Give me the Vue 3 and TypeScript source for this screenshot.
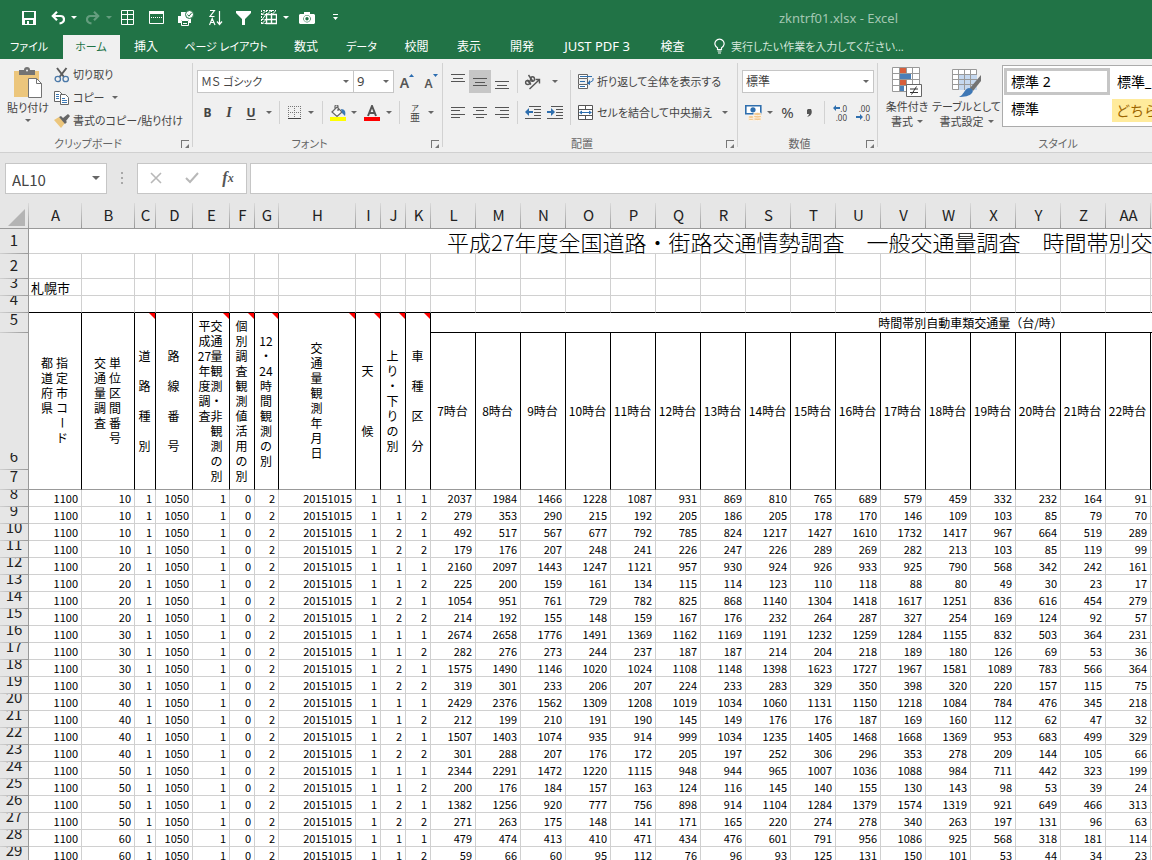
<script setup lang="ts">
interface Column {
  name: string
  width: number
}

interface Heading {
  lines: string[]
  note: boolean
  tight?: boolean
}

const tabs: string[] = ['ファイル', 'ホーム', '挿入', 'ページ レイアウト', '数式', 'データ', '校閲', '表示', '開発', 'JUST PDF 3', '検査']
const activeTab = 'ホーム'
const isKana = (text: string): boolean => /[ァ-ン]/.test(text)
const isLatin = (text: string): boolean => /[A-Z]/.test(text)

const leading: Column[] = [
  { name: 'A', width: 53 },
  { name: 'B', width: 53 },
  { name: 'C', width: 21 },
  { name: 'D', width: 37 },
  { name: 'E', width: 37 },
  { name: 'F', width: 25 },
  { name: 'G', width: 24 },
  { name: 'H', width: 77 },
  { name: 'I', width: 25 },
  { name: 'J', width: 25 },
  { name: 'K', width: 25 },
]
const hourly: Column[] = 'L M N O P Q R S T U V W X Y Z AA'.split(' ').map((name) => ({ name, width: 45 }))
const columns: Column[] = [...leading, ...hourly]

const headings: Heading[] = [
  { lines: ['都道府県', '指定市コード'], note: false },
  { lines: ['交通量調査', '単位区間番号'], note: false },
  { lines: ['道 路 種 別'], note: true },
  { lines: ['路 線 番 号'], note: false },
  { lines: ['平成27年度調査', '交通量観測・非観測の別'], note: true, tight: true },
  { lines: ['個別調査観測値活用の別'], note: true },
  { lines: ['12・24時間観測の別'], note: true },
  { lines: ['交通量観測年月日'], note: true },
  { lines: ['天   候'], note: true },
  { lines: ['上り・下りの別'], note: true },
  { lines: ['車 種 区 分'], note: true },
]
const hours: string[] = Array.from({ length: 16 }, (_, i) => `${i + 7}時台`)

const glyphs = (line: string): string[] => line.match(/\d+|./gu) ?? []

const counts: string[] = [
  '2037 1984 1466 1228 1087 931 869 810 765 689 579 459 332 232 164 91',
  '279 353 290 215 192 205 186 205 178 170 146 109 103 85 79 70',
  '492 517 567 677 792 785 824 1217 1427 1610 1732 1417 967 664 519 289',
  '179 176 207 248 241 226 247 226 289 269 282 213 103 85 119 99',
  '2160 2097 1443 1247 1121 957 930 924 926 933 925 790 568 342 242 161',
  '225 200 159 161 134 115 114 123 110 118 88 80 49 30 23 17',
  '1054 951 761 729 782 825 868 1140 1304 1418 1617 1251 836 616 454 279',
  '214 192 155 148 159 167 176 232 264 287 327 254 169 124 92 57',
  '2674 2658 1776 1491 1369 1162 1169 1191 1232 1259 1284 1155 832 503 364 231',
  '282 276 273 244 237 187 187 214 204 218 189 180 126 69 53 36',
  '1575 1490 1146 1020 1024 1108 1148 1398 1623 1727 1967 1581 1089 783 566 364',
  '319 301 233 206 207 224 233 283 329 350 398 320 220 157 115 75',
  '2429 2376 1562 1309 1208 1019 1034 1060 1131 1150 1218 1084 784 476 345 218',
  '212 199 210 191 190 145 149 176 176 187 169 160 112 62 47 32',
  '1507 1403 1074 935 914 999 1034 1235 1405 1468 1668 1369 953 683 499 329',
  '301 288 207 176 172 205 197 252 306 296 353 278 209 144 105 66',
  '2344 2291 1472 1220 1115 948 944 965 1007 1036 1088 984 711 442 323 199',
  '200 176 184 157 163 124 116 145 140 155 130 143 98 53 39 24',
  '1382 1256 920 777 756 898 914 1104 1284 1379 1574 1319 921 649 466 313',
  '271 263 175 148 141 171 165 220 274 278 340 263 197 131 96 63',
  '479 474 413 410 471 434 476 601 791 956 1086 925 568 318 181 114',
  '59 66 60 95 112 76 96 93 125 131 150 101 53 44 34 23',
]

const records = counts.map((line, i) => ({
  row: i + 8,
  cells: [
    '1100',
    String(10 * (Math.floor(i / 4) + 1)),
    '1',
    '1050',
    '1',
    '0',
    '2',
    '20151015',
    '1',
    String((Math.floor(i / 2) % 2) + 1),
    String((i % 2) + 1),
    ...line.split(' '),
  ],
}))
</script>

<template>
  <div class="app">
    <header class="titlebar">
      <div class="quick">
        <button aria-label="上書き保存">
          <svg width="14" height="14" viewBox="0 0 14 14"><path fill="#fff" fill-rule="evenodd" d="M0 0h14v14H0zM2 1v6h10V1zM3 9v4h2v-3h2v3h4V9z" /></svg>
        </button>
        <button aria-label="元に戻す">
          <svg width="14" height="14" viewBox="0 0 14 14"><path d="M2 5h7.500c2.300 0 3.500 1.400 3.500 3.500S11.500 12 8.500 12.500M6 .8 1.800 5 6 9.200" fill="none" stroke="#fff" stroke-width="2.200" /></svg>
          <i class="caret"></i>
        </button>
        <button class="dim" aria-label="やり直し">
          <svg width="14" height="14" viewBox="0 0 14 14"><path d="M12 5H4.500C2.200 5 1 6.400 1 8.500S2.500 12 5.500 12.500M8 .8 12.200 5 8 9.200" fill="none" stroke="#fff" stroke-width="2.200" /></svg>
          <i class="caret"></i>
        </button>
        <button aria-label="枠線">
          <svg width="13" height="15" viewBox="0 0 13 15"><path d="M.5.5h12v14H.5zM6.500 0v4M6.500 10v5M6.500 5v5M0 4.500h13M0 9.500h13" fill="none" stroke="#fff" /></svg>
        </button>
        <button aria-label="ウィンドウ">
          <svg width="15" height="13" viewBox="0 0 15 13"><path d="M.5.5h14v12H.5z" fill="none" stroke="#fff" /><path d="M0 0h15v3H0z" fill="#fff" /><path d="M2 6.500h11" stroke="#fff" stroke-dasharray="1 1" /></svg>
        </button>
        <button aria-label="印刷プレビュー">
          <svg width="17" height="16" viewBox="0 0 17 16"><path fill="#fff" d="M0 6h3V2h5v4h5v7h-2v-3H3v3H0z" /><path d="M3.500 10.500h7v5h-7zM5 13.500h4" fill="#217346" stroke="#fff" /><circle cx="11.500" cy="4.500" r="4" fill="#fff" stroke="#217346" /><path d="m9.500 4.500 1.500 1.700 2.700-3.400" fill="none" stroke="#217346" /></svg>
        </button>
        <button aria-label="降順">
          <svg width="14" height="16" viewBox="0 0 14 16"><path d="M1 .5h4.500L1 6.500h4.500M.5 15 3.200 8.500 6 15M1.500 12.500H5M10.500 1v13M8 11.500l2.500 3 2.500-3" fill="none" stroke="#fff" stroke-width="1.200" /></svg>
        </button>
        <button aria-label="フィルター">
          <svg width="15" height="14" viewBox="0 0 15 14"><path fill="#fff" d="M0 0h15v2L9 8v6H6V8L0 2z" /></svg>
        </button>
        <button aria-label="罫線">
          <svg width="16" height="15" viewBox="0 0 16 15"><path d="M.5 14V.5H15M.5 4.500H15M5.500 0v14M10.500 0v4M.5 9.500H5M.5 13.500H5" fill="none" stroke="#fff" stroke-dasharray="2 1" /><path d="m1.500 4 3-3m2 3 3-3m2 3 3-3M1.500 9l3-4M1.500 13l3-3" stroke="#fff" /><path d="M5.500 4.500h10v9h-10zM10.500 4.500v9M5.500 9.500h10" fill="none" stroke="#fff" stroke-width="1.400" /></svg>
          <i class="caret"></i>
        </button>
        <button aria-label="カメラ">
          <svg width="16" height="12" viewBox="0 0 16 12"><path fill="#fff" fill-rule="evenodd" d="M1 2h4V0h6v2h4l1 1v8l-1 1H1l-1-1V3zm7 1a3.700 3.700 0 1 0 .1 0z" /><circle cx="8" cy="6.700" r="2.400" fill="none" stroke="#fff" stroke-width="1.400" /></svg>
        </button>
        <button aria-label="クイック アクセスのカスタマイズ">
          <svg width="5" height="7" viewBox="0 0 5 7"><path fill="#fff" d="M0 0h5v1H0zM0 3h5L2.500 6z" /></svg>
        </button>
      </div>
      <h1>zkntrf01.xlsx - Excel</h1>
    </header>

    <nav class="tabs">
      <button v-for="tab in tabs" :key="tab" :class="{ active: tab === activeTab, kana: isKana(tab), latin: isLatin(tab) }">{{ tab }}</button>
      <label class="tell">
        <svg width="11" height="16" viewBox="0 0 11 16"><path d="M3.500 11.500V9.800A4.600 4.600 0 1 1 7.500 9.800v1.700zM3.500 13h4M4 15h3" fill="none" stroke="#fff" stroke-width="1.200" /></svg>
        <input type="text" placeholder="実行したい作業を入力してください..." aria-label="実行したい作業" />
      </label>
    </nav>

    <div class="ribbon">
      <section class="group clipboard">
        <div class="body">
          <button class="big">
            <svg width="30" height="32" viewBox="0 0 30 32"><path fill="#ecc67c" d="M1 4h25v26H1z" /><path fill="#737373" d="M6 3h5a3 3 0 0 1 6 0h5v5H6z" /><circle cx="14" cy="3.500" r="1" fill="#f0f0f0" /><path d="M15.500 11.500h8l5 5v14h-13z" fill="#fff" stroke="#737373" /><path d="M23.500 11.500v5h5" fill="none" stroke="#737373" /></svg>
            <span>貼り付け</span>
            <i class="caret"></i>
          </button>
          <div class="stack">
            <button>
              <svg width="16" height="16" viewBox="0 0 16 16"><path d="m3 1 7 9M12.500 1 5.500 10" stroke="#5c5c5c" stroke-width="2" /><circle cx="3.800" cy="12" r="2.700" fill="none" stroke="#4a78a8" stroke-width="1.300" /><circle cx="11.700" cy="12" r="2.700" fill="none" stroke="#4a78a8" stroke-width="1.300" /></svg>
              <span>切り取り</span>
            </button>
            <button>
              <svg width="16" height="14" viewBox="0 0 16 14"><path d="M.5.5h5l3 3v7h-8z" fill="#fff" stroke="#666" /><path d="M6.500 3.500h5l3 3v7h-8z" fill="#fff" stroke="#666" /><path d="M2 3.500h3M2 5.500h3M2 7.500h3M8 7.500h3M8 9.500h5M8 11.500h5" stroke="#3b78b4" /></svg>
              <span>コピー</span>
              <i class="caret"></i>
            </button>
            <button>
              <svg width="16" height="14" viewBox="0 0 16 14"><path fill="#ecc67c" d="m0 6 5-3 6 6-4 5z" /><path fill="#666" d="m5 3 2-1 2 2 5-4 2 2-4 5 1 1-2 2z" /></svg>
              <span>書式のコピー/貼り付け</span>
            </button>
          </div>
        </div>
        <footer>クリップボード<button class="launch" aria-label="クリップボードの設定"></button></footer>
      </section>

      <section class="group font">
        <div class="body">
          <div class="tools pickers">
            <span class="pick"><select aria-label="フォント"><option>ＭＳ ゴシック</option></select></span>
            <span class="pick"><select aria-label="フォント サイズ"><option>9</option></select></span>
            <button class="grow" aria-label="フォント サイズの拡大"><b>A</b><svg width="5" height="3" viewBox="0 0 5 3"><path fill="#2b6cb0" d="M0 3h5L2.500 0z" /></svg></button>
            <button class="grow small" aria-label="フォント サイズの縮小"><b>A</b><svg width="5" height="3" viewBox="0 0 5 3"><path fill="#2b6cb0" d="M0 0h5L2.500 3z" /></svg></button>
          </div>
          <div class="tools marks">
            <button class="letter">B</button>
            <button class="letter italic">I</button>
            <button class="letter under">U</button>
            <button aria-label="下線の種類"><i class="caret"></i></button>
            <i class="sep"></i>
            <button aria-label="罫線">
              <svg width="13" height="13" viewBox="0 0 13 13"><path d="M.5 0v12M6.500 0v12M12.500 0v12M0 .5h13M0 6.500h13" stroke="#777" stroke-dasharray="1 1" /><path d="M0 12.500h13" stroke="#444" /></svg>
            </button>
            <button aria-label="罫線の種類"><i class="caret"></i></button>
            <i class="sep"></i>
            <button aria-label="塗りつぶしの色">
              <svg width="16" height="16" viewBox="0 0 16 16"><path d="m2 7 5-5 5 5-5 4.500zM5 5V1.500a1.500 1.500 0 0 1 3 0V6" fill="#f8f8f8" stroke="#666" stroke-width="1.200" /><path fill="#3b78b4" d="M11 4c4 0 5 3 4 7l-3-3z" /><path fill="#ff0" d="M0 12h16v4H0z" /></svg>
            </button>
            <button aria-label="塗りつぶしの色を選択"><i class="caret"></i></button>
            <button aria-label="フォントの色">
              <svg width="16" height="16" viewBox="0 0 16 16"><path d="M4 11 8 1l4 10M5.500 8h5" fill="none" stroke="#555" stroke-width="2" /><path fill="#f00" d="M0 12h16v4H0z" /></svg>
            </button>
            <button aria-label="フォントの色を選択"><i class="caret"></i></button>
            <i class="sep"></i>
            <button class="ruby"><small>ア</small><span>亜</span></button>
            <button aria-label="ふりがなの設定"><i class="caret"></i></button>
          </div>
        </div>
        <footer>フォント<button class="launch" aria-label="フォントの設定"></button></footer>
      </section>

      <section class="group align">
        <div class="body">
          <div class="pad">
            <div class="tools lines">
              <button class="up" aria-label="上揃え"><svg width="14" height="8" viewBox="0 0 14 8"><path d="M0 .5h14M2 4.500h10M0 7.500h14" stroke="#555" /></svg></button>
              <button class="on" aria-label="上下中央揃え"><svg width="14" height="8" viewBox="0 0 14 8"><path d="M0 .5h14M2 4.500h10M0 7.500h14" stroke="#555" /></svg></button>
              <button class="down" aria-label="下揃え"><svg width="14" height="8" viewBox="0 0 14 8"><path d="M0 .5h14M2 4.500h10M0 7.500h14" stroke="#555" /></svg></button>
              <i class="sep"></i>
              <button aria-label="方向">
                <svg width="17" height="16" viewBox="0 0 17 16"><g fill="none" stroke="#555" stroke-width="1.400"><ellipse cx="3.800" cy="8.500" rx="2.200" ry="2" /><path d="m3 6 4 4.500" /><ellipse cx="8.500" cy="5" rx="2" ry="2.300" /><path d="M4.500 1 9 7.500" /><path d="m5.500 15 9.500-9M11.500 5.500h4v4" /></g></svg>
              </button>
              <button aria-label="方向を選択"><i class="caret"></i></button>
            </div>
            <div class="tools lines">
              <button aria-label="左揃え"><svg width="14" height="11" viewBox="0 0 14 11"><path d="M0 .5h14M0 3.500h9M0 7.500h14M0 10.500h9" stroke="#555" /></svg></button>
              <button aria-label="中央揃え"><svg width="14" height="11" viewBox="0 0 14 11"><path d="M0 .5h14M3 3.500h8M0 7.500h14M3 10.500h8" stroke="#555" /></svg></button>
              <button aria-label="右揃え"><svg width="14" height="11" viewBox="0 0 14 11"><path d="M0 .5h14M5 3.500h9M0 7.500h14M5 10.500h9" stroke="#555" /></svg></button>
              <i class="sep"></i>
              <button aria-label="インデントを減らす"><svg width="16" height="13" viewBox="0 0 16 13"><path d="M4 .5h12M9 3.500h7M9 6.500h7M9 9.500h7M0 12.500h16" stroke="#555" /><path fill="#2f6fae" d="M0 6l4-4v3h4v2H4v3z" /></svg></button>
              <button aria-label="インデントを増やす"><svg width="16" height="13" viewBox="0 0 16 13"><path d="M4 .5h12M9 3.500h7M9 6.500h7M9 9.500h7M0 12.500h16" stroke="#555" /><path fill="#2f6fae" d="M8 6 4 2v3H0v2h4v3z" /></svg></button>
            </div>
          </div>
          <i class="sep tall"></i>
          <div class="pad">
            <button class="line">
              <svg width="16" height="15" viewBox="0 0 16 15"><path d="M.5.5h9v4h-9zM.5 10.500h9v4h-9z" fill="#fff" stroke="#666" /><path d="M.5 5v5M9.500 5v5" stroke="#666" /><path d="M2 2.500h12M2 7.500h5M2 12.500h5M15 4v2.500L11 9" fill="none" stroke="#2f6fae" /><path fill="#2f6fae" d="M9 9.500 12 6v5z" /></svg>
              <span>折り返して全体を表示する</span>
            </button>
            <button class="line">
              <svg width="16" height="15" viewBox="0 0 16 15"><path d="M.5.5h14v14H.5zM0 4.500h15M0 10.500h15M7.500 0v4M7.500 11v4" fill="#fff" stroke="#555" /><path d="M2 7.500h11" stroke="#2f6fae" /><path fill="#2f6fae" d="m1 7.500 3-2v4zM14 7.500l-3-2v4z" /></svg>
              <span>セルを結合して中央揃え</span>
              <i class="caret"></i>
            </button>
          </div>
        </div>
        <footer>配置<button class="launch" aria-label="配置の設定"></button></footer>
      </section>

      <section class="group number">
        <div class="body">
          <span class="pick"><select aria-label="表示形式"><option>標準</option></select></span>
          <div class="tools figures">
            <button aria-label="通貨表示形式">
              <svg width="17" height="16" viewBox="0 0 17 16"><path d="M.8.8h15v8H.8z" fill="#fff" stroke="#2f6fae" stroke-width="1.600" /><circle cx="8" cy="4.800" r="2.600" fill="#2f6fae" /><g fill="#f4c88e" stroke="#fff" stroke-width=".7"><ellipse cx="12.500" cy="14" rx="4" ry="1.600" /><ellipse cx="12.500" cy="11.500" rx="4" ry="1.600" /><ellipse cx="12.500" cy="9" rx="4" ry="1.600" /><ellipse cx="6" cy="14" rx="3" ry="1.500" /><ellipse cx="6" cy="12" rx="3" ry="1.500" /></g></svg>
            </button>
            <button aria-label="通貨を選択"><i class="caret"></i></button>
            <button class="percent">%</button>
            <button aria-label="桁区切りスタイル"><svg width="6" height="8" viewBox="0 0 6 8"><path fill="#555" d="M2 0h3c2 4 0 7-4 8 1-1 2-2 2-3H1V1z" /></svg></button>
            <i class="sep"></i>
            <button class="decimal" aria-label="小数点以下の表示桁数を増やす"><span><svg width="7" height="6" viewBox="0 0 7 6"><path fill="#2f6fae" d="m0 3 3-3v2h4v2H3v2z" /></svg>.0</span><span>.00</span></button>
            <button class="decimal" aria-label="小数点以下の表示桁数を減らす"><span>.00</span><span><svg width="7" height="6" viewBox="0 0 7 6"><path fill="#2f6fae" d="M7 3 4 0v2H0v2h4v2z" /></svg>.0</span></button>
          </div>
        </div>
        <footer>数値<button class="launch" aria-label="表示形式の設定"></button></footer>
      </section>

      <section class="group styles">
        <div class="body">
          <button class="big">
            <svg width="31" height="31" viewBox="0 0 31 31"><path d="M.5.500h27v24H.500z" fill="#fff" stroke="#999" /><path d="M8 1h6v5H8zM8 13h6v5H8z" fill="#d75f3c" /><path d="M8 19h4v5H8z" fill="#4a7fb8" /><path d="M7.500 0v24M14.500 0v24M20.500 0v24M0 6.500h28M0 12.500h28M0 18.500h28" stroke="#999" fill="none" /><path d="M8 7h11v5H8z" fill="#4a7fb8" /><path d="M14.500 17.500h15v12h-15z" fill="#fff" stroke="#666" /><path d="M18 22h8M18 25.500h8M24.500 19.500l-5 8" stroke="#333" fill="none" /></svg>
            <span>条件付き</span>
            <span class="more">書式<i class="caret"></i></span>
          </button>
          <button class="big roomy">
            <svg width="30" height="31" viewBox="0 0 30 31"><path d="M.5 2.500h24v20H.5z" fill="#fff" stroke="#999" /><path d="M7 8h18v15H7z" fill="#c5d8ef" /><path d="M6.500 2v21M12.500 2v21M18.500 2v21M0 7.500h25M0 12.500h25M0 17.500h25" stroke="#999" fill="none" /><path d="M29 8 18 21l3 3 8-10z" fill="#737373" /><path d="M17 21c3 0 5 3 3 5-2 3-8 4-13 4 5-2 5-8 10-9z" fill="#3f78b5" /></svg>
            <span>テーブルとして</span>
            <span class="more">書式設定<i class="caret"></i></span>
          </button>
          <div class="gallery">
            <button class="chosen">標準 2</button>
            <button>標準_</button>
            <button>標準</button>
            <button class="neutral">どちら</button>
          </div>
        </div>
        <footer>スタイル</footer>
      </section>
    </div>

    <div class="formula">
      <div class="namebox">
        <input type="text" value="AL10" aria-label="名前ボックス" />
        <button aria-label="名前の一覧"><i class="caret"></i></button>
      </div>
      <i class="grip"></i>
      <div class="entry">
        <button aria-label="キャンセル"><svg width="12" height="12" viewBox="0 0 12 12"><path d="m1 1 10 10M11 1 1 11" stroke="#b8b8b8" stroke-width="1.600" /></svg></button>
        <button aria-label="入力"><svg width="14" height="12" viewBox="0 0 14 12"><path d="m1 6 4 4 8-9" fill="none" stroke="#b8b8b8" stroke-width="2" /></svg></button>
        <button class="fx">f<sub>x</sub></button>
      </div>
      <input class="entry-line" type="text" aria-label="数式バー" />
    </div>

    <main class="sheet">
      <table>
        <colgroup>
          <col class="gutter" />
          <col v-for="c in columns" :key="c.name" :style="{ width: c.width + 'px' }" />
          <col class="rest" />
        </colgroup>
        <thead>
          <tr>
            <th class="corner"><svg width="17" height="17" viewBox="0 0 17 17"><path fill="#b4b4b4" d="M17 0v17H0z" /></svg></th>
            <th v-for="c in columns" :key="c.name" scope="col">{{ c.name }}</th>
            <th></th>
          </tr>
        </thead>
        <tbody>
          <tr class="r25">
            <th scope="row"><div>1</div></th>
            <td :colspan="leading.length" class="open"></td>
            <td :colspan="hourly.length + 1" class="heading">平成27年度全国道路・街路交通情勢調査　一般交通量調査　時間帯別交</td>
          </tr>
          <tr class="r25">
            <th scope="row"><div>2</div></th>
            <td v-for="c in columns" :key="c.name"></td>
            <td></td>
          </tr>
          <tr class="r17">
            <th scope="row"><div>3</div></th>
            <td class="place">札幌市</td>
            <td v-for="c in columns.slice(1)" :key="c.name"></td>
            <td></td>
          </tr>
          <tr class="r17 above">
            <th scope="row"><div>4</div></th>
            <td v-for="c in columns" :key="c.name"></td>
            <td></td>
          </tr>
          <tr class="r20 head">
            <th scope="row"><div>5</div></th>
            <td v-for="(h, i) in headings" :key="i" rowspan="3" class="frozen">
              <i v-if="h.note" class="note"></i>
              <div class="vertical" :class="{ tight: h.tight }">
                <div v-for="line in h.lines" :key="line">
                  <span v-for="(g, k) in glyphs(line)" :key="k" :class="{ bar: g === 'ー' }">{{ g }}</span>
                </div>
              </div>
            </td>
            <td :colspan="hourly.length + 1">時間帯別自動車類交通量（台/時）</td>
          </tr>
          <tr class="r137 head">
            <th scope="row"><div>6</div></th>
            <td v-for="h in hours" :key="h" rowspan="2" class="frozen">{{ h }}</td>
            <td rowspan="2" class="frozen"></td>
          </tr>
          <tr class="r20">
            <th scope="row"><div>7</div></th>
          </tr>
          <tr v-for="r in records" :key="r.row" class="r17">
            <th scope="row"><div>{{ r.row }}</div></th>
            <td v-for="(v, i) in r.cells" :key="i" class="num">{{ v }}</td>
            <td></td>
          </tr>
        </tbody>
      </table>
    </main>
  </div>
</template>

<style>
body {
  margin: 0;
  overflow: hidden;
}
</style>

<style scoped>
.app {
  display: flex;
  flex-direction: column;
  height: 100vh;
  overflow: hidden;
  background: #e6e6e6;
  color: #444;
  font: 12px/15px "Noto Sans", "Noto Sans CJK JP", sans-serif;
  font-feature-settings: "palt";
}
* {
  box-sizing: border-box;
}
button,
input,
select {
  margin: 0;
  padding: 0;
  border: 0;
  background: none;
  color: inherit;
  font: inherit;
  font-feature-settings: inherit;
  outline: none;
  border-radius: 0;
}
button {
  display: flex;
  align-items: center;
  justify-content: center;
  white-space: nowrap;
}
svg {
  display: block;
  flex: none;
}
.caret {
  flex: none;
  display: inline-block;
  border: 3px solid transparent;
  border-top-color: #666;
  border-bottom: 0;
}

.titlebar {
  flex: none;
  display: flex;
  align-items: center;
  height: 35px;
  background: #217346;
}
.quick {
  flex: none;
  display: grid;
  grid-template-columns: 29px 35px 35px 28px 29px 31px 27px 25px 38px 34px 1fr;
  align-items: center;
  width: 779px;
  height: 30px;
  padding-left: 22px;
}
.quick button {
  justify-content: flex-start;
  gap: 6px;
}
.quick .caret {
  border-top-color: #fff;
}
.quick .dim {
  opacity: 0.3;
}
h1 {
  margin: 0;
  color: #a3c7b2;
  font: 13px/34px "Noto Sans", sans-serif;
  white-space: nowrap;
}

.tabs {
  flex: none;
  display: grid;
  grid-template-columns: 63px 57px 53px 107px 53px 58px 52px 53px 53px 97px 54px 1fr;
  height: 24px;
  background: #217346;
  color: #fff;
}
.tabs button {
  padding: 0 1px 2px 0;
}
.tabs button:first-child {
  padding-right: 5px;
}
.tabs .active {
  background: #f0f0f0;
  color: #217346;
}
.tabs .kana {
  font-size: 11px;
}
.tabs .latin {
  font-size: 13px;
}
.tell {
  display: flex;
  align-items: center;
  gap: 6px;
  padding: 0 0 2px 14px;
  font-size: 11px;
}
.tell input {
  flex: 1;
  min-width: 0;
}
.tell input::placeholder {
  color: #d3e5da;
  opacity: 1;
}

.ribbon {
  flex: none;
  display: flex;
  height: 94px;
  overflow: hidden;
  background: #f0f0f0;
  border-bottom: 1px solid #d0d0d0;
}
.group {
  position: relative;
  flex: none;
  display: flex;
  flex-direction: column;
}
.group::after {
  content: "";
  position: absolute;
  top: 4px;
  right: 0;
  bottom: 5px;
  width: 1px;
  background: #d2d2d2;
}
.body {
  height: 76px;
}
footer {
  display: flex;
  justify-content: center;
  height: 17px;
  color: #666;
  font-size: 11px;
  line-height: 17px;
}
.clipboard {
  width: 193px;
}
.font {
  width: 250px;
}
.clipboard footer,
.font footer,
.align footer,
.number footer {
  padding-right: 17px;
}
.align {
  width: 295px;
}
.number {
  width: 140px;
}
.styles {
  width: 360px;
}
.launch {
  position: absolute;
  right: 4px;
  bottom: 4px;
  width: 8px;
  height: 8px;
  border-top: 1px solid #777;
  border-left: 1px solid #777;
}
.launch::after {
  content: "";
  position: absolute;
  right: 0;
  bottom: 0;
  border: 2px solid transparent;
  border-right-color: #777;
  border-bottom-color: #777;
}

.clipboard .body {
  display: flex;
  padding-left: 4px;
}
.big {
  flex: none;
  flex-direction: column;
  justify-content: flex-start;
  width: 48px;
  padding-top: 8px;
  font-size: 11px;
}
.big svg {
  margin-bottom: 1px;
}
.clipboard .big .caret {
  margin-top: 4px;
}
.more {
  display: flex;
  align-items: center;
  gap: 4px;
}
.stack {
  display: grid;
  grid-template-rows: repeat(3, 23px);
  align-content: start;
  padding: 4px 0 0 2px;
  font-size: 11px;
}
.stack button {
  justify-content: flex-start;
  gap: 3px;
}
.stack .caret {
  margin-left: 4px;
}
.font .body {
  display: grid;
  align-content: start;
  gap: 8px;
  padding: 11px 0 0 4px;
}
.tools {
  display: grid;
  height: 23px;
}
.tools > * {
  min-width: 0;
}
.pickers {
  grid-template-columns: 157px 40px 26px 22px;
}
.marks {
  grid-template-columns: 21px 22px 22px 14px 6px 24px 10px 12px 20px 12px 24px 9px 12px 20px 12px;
}
.lines {
  grid-template-columns: 22px 22px 22px 9px 21px 23px;
}
.figures {
  grid-template-columns: 22px 12px 23px 20px 10px 21px 23px;
}
.pick {
  position: relative;
  display: block;
  height: 23px;
}
.pick + .pick {
  margin-left: -1px;
}
.pick select {
  width: 100%;
  height: 100%;
  padding: 0 3px;
  appearance: none;
  background: #fff;
  border: 1px solid #c6c6c6;
}
.pick::after {
  content: "";
  position: absolute;
  top: 10px;
  right: 5px;
  border: 3px solid transparent;
  border-top-color: #666;
  border-bottom: 0;
}
.pickers select {
  font-size: 11px;
}
.pickers .pick + .pick select {
  font-size: 13px;
}
.grow {
  align-items: flex-start;
  padding-top: 4px;
}
.grow b {
  font: 600 14px/17px "Noto Sans", sans-serif;
  color: #555;
}
.grow.small b {
  font-size: 12px;
  line-height: 19px;
}
.letter {
  font-weight: 700;
}
.italic {
  font-style: italic;
  font-family: "Liberation Serif", serif;
  font-size: 14px;
}
.under {
  text-decoration: underline;
  text-underline-offset: 2px;
}
.sep {
  justify-self: center;
  width: 1px;
  background: #d2d2d2;
}
.ruby {
  flex-direction: column;
  font-size: 10px;
  line-height: 11px;
}
.ruby small {
  font-size: 8px;
  line-height: 9px;
}
.align .body {
  display: grid;
  grid-template-columns: 119px 8px 1fr;
  padding: 11px 0 0 4px;
}
.pad {
  display: grid;
  align-content: start;
  gap: 8px;
}
.tall {
  height: 55px;
}
.on {
  background: #c6c6c6;
}
.up {
  padding-bottom: 7px;
}
.down {
  padding-top: 7px;
}
.line {
  justify-content: flex-start;
  height: 23px;
  gap: 3px;
  padding-left: 4px;
  font-size: 11px;
}
.line .caret {
  margin-left: 7px;
}
.number .body {
  display: grid;
  align-content: start;
  gap: 8px;
  padding: 11px 4px 0 4px;
}
.percent {
  font-size: 15px;
}
.decimal {
  flex-direction: column;
  align-items: flex-end;
  padding-right: 3px;
  font-size: 8px;
  line-height: 9px;
}
.decimal span {
  display: flex;
  align-items: center;
}
.styles .body {
  display: flex;
  padding-left: 5px;
}
.roomy {
  width: 71px;
}
.gallery {
  flex: none;
  display: grid;
  grid-template-columns: 106px 120px;
  grid-template-rows: 27px 27px;
  width: 300px;
  height: 62px;
  margin-top: 6px;
  padding: 2px 1px;
  background: #fff;
  border: 1px solid #ababab;
}
.gallery button {
  justify-content: flex-start;
  padding-left: 7px;
  color: #000;
  font-size: 14px;
  font-feature-settings: normal;
}
.gallery .chosen {
  padding-left: 4px;
  border: 3px solid #c6c6c6;
}
.gallery .neutral {
  height: 23px;
  margin: 4px 0 0 2px;
  padding-left: 4px;
  background: #ffeb9c;
  color: #9c6500;
}

.formula {
  flex: none;
  display: flex;
  align-items: center;
  height: 50px;
  padding-left: 5px;
}
.namebox {
  display: flex;
  width: 102px;
  height: 31px;
  background: #fff;
  border: 1px solid #c6c6c6;
}
.namebox input {
  flex: 1;
  min-width: 0;
  padding: 3px 0 0 6px;
  font-family: "Noto Sans CJK JP", sans-serif;
  font-size: 15px;
}
.namebox button {
  width: 20px;
}
.namebox .caret {
  border-width: 4px 4px 0;
}
.grip {
  width: 2px;
  height: 12px;
  margin: 0 14px;
  background: repeating-linear-gradient(#a8a8a8 0 2px, transparent 2px 5px);
}
.entry {
  display: grid;
  grid-template-columns: 36px 36px 36px;
  width: 110px;
  height: 31px;
  background: #fff;
  border: 1px solid #c6c6c6;
}
.fx {
  color: #555;
  font: italic 700 16px/20px "Liberation Serif", serif;
}
.fx sub {
  font-size: 12px;
  line-height: 12px;
  vertical-align: baseline;
}
.entry-line {
  flex: 1;
  min-width: 0;
  height: 31px;
  margin-left: 3px;
  background: #fff;
  border: 1px solid #c6c6c6;
  border-right: 0;
}

.sheet {
  flex: 1;
  min-height: 0;
  overflow: hidden;
  font-feature-settings: normal;
}
table {
  table-layout: fixed;
  width: 1511px;
  border-collapse: separate;
  border-spacing: 0;
  color: #000;
  font: 12px/15px "Noto Sans CJK JP", sans-serif;
}
.gutter {
  width: 29px;
}
.rest {
  width: 360px;
}
th,
td {
  padding: 0;
  white-space: nowrap;
}
th {
  background: #e6e6e6;
  color: #222;
  font-weight: 400;
  font-size: 15px;
}
thead th {
  height: 26px;
  padding-bottom: 2px;
  border-bottom: 1px solid #999;
  background: linear-gradient(#dadada, #999) right / 1px 100% no-repeat #e6e6e6;
}
.corner svg {
  margin: 5px 0 0 8px;
}
tbody th {
  border-right: 1px solid #999;
  background: linear-gradient(90deg, #d0d0d0, #999) bottom / 100% 1px no-repeat #e6e6e6;
  vertical-align: bottom;
}
tbody th div {
  display: flex;
  align-items: flex-end;
  justify-content: center;
  height: 16px;
  margin-bottom: 1px;
  overflow: hidden;
  line-height: 26px;
}
.r25 th div {
  height: 24px;
}
.r20 th div {
  height: 19px;
}
td {
  background: #fff;
  border-right: 1px solid #d0d0d0;
  border-bottom: 1px solid #d0d0d0;
}
.r25 > * {
  height: 25px;
}
.r20 > th {
  height: 20px;
}
.r17 > * {
  height: 17px;
}
.r137 > th {
  height: 137px;
}
.open {
  border-right: 0;
}
.heading {
  padding-left: 16px;
  font-size: 22px;
  font-weight: 300;
  line-height: 24px;
}
.place {
  padding-left: 2px;
  font-size: 13px;
}
.above td {
  border-bottom-color: #000;
}
.head td {
  position: relative;
  border-color: #000;
  text-align: center;
}
.head td.frozen {
  padding: 0 1px 2px 0;
  border-bottom-color: #999;
}
.vertical {
  display: flex;
  justify-content: center;
  gap: 3px;
}
.vertical.tight {
  gap: 0;
}
.vertical span {
  display: flex;
  justify-content: center;
  width: 12px;
  height: 15px;
}
.vertical .bar {
  writing-mode: vertical-rl;
  line-height: 12px;
}
.note {
  position: absolute;
  top: 0;
  right: 0;
  border: 3px solid transparent;
  border-top-color: #f00;
  border-right-color: #f00;
}
.num {
  padding-right: 3px;
  font-size: 11px;
  text-align: right;
}
</style>
